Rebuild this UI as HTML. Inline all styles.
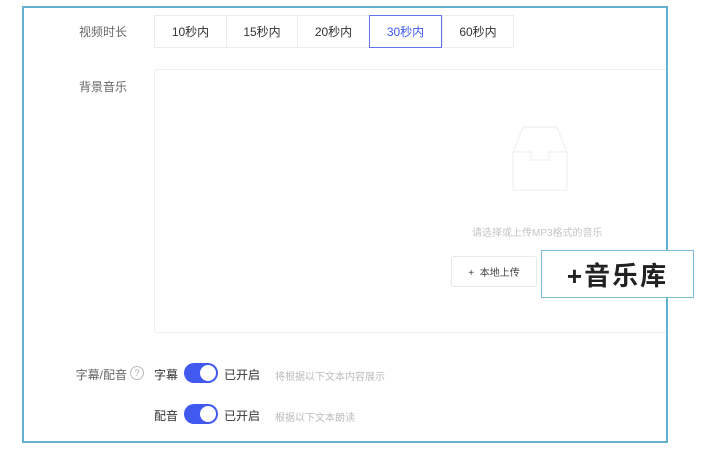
<!DOCTYPE html>
<html><head><meta charset="utf-8"><style>
body{margin:0;width:711px;height:469px;background:#fff;font-family:"Liberation Sans","Noto Sans CJK SC",sans-serif;position:relative;overflow:hidden}
.a{position:absolute}
.frame{left:22px;top:6px;width:642px;height:433px;border:2px solid #62b2d2}
.lbl{font-size:12px;color:#666}
.seg{top:15px;height:33px;border:1px solid #ececec;font-size:12px;color:#333;display:flex;align-items:center;justify-content:center;box-sizing:border-box}
.tog{width:34px;height:20px;border-radius:10px;background:#4259f0}
.tog:after{content:"";position:absolute;right:2px;top:2px;width:16px;height:16px;border-radius:50%;background:#fff}
</style></head><body>
<div class="a lbl" style="left:79px;top:23px">视频时长</div>
<div class="a seg" style="left:154px;width:73px">10秒内</div>
<div class="a seg" style="left:226px;width:72px">15秒内</div>
<div class="a seg" style="left:297px;width:73px">20秒内</div>
<div class="a seg" style="left:442px;width:72px">60秒内</div>
<div class="a seg" style="left:369px;width:73px;border:1px solid #6275ee;color:#3d5af1">30秒内</div>
<div class="a lbl" style="left:79px;top:78px">背景音乐</div>
<div class="a" style="left:154px;top:69px;width:520px;height:262px;border:1px solid #efefef;border-radius:3px"></div>
<svg class="a" style="left:505px;top:112px" width="70" height="80"><path d="M8 40 L18 15 H52 L62 40 V78 H8 Z M8 40 H26 V48 H44 V40 H62" fill="none" stroke="#f3f3f3" stroke-width="1.5"/></svg>
<div class="a" style="left:472px;top:224px;font-size:10px;color:#c4c4c4">请选择或上传MP3格式的音乐</div>
<div class="a" style="left:451px;top:256px;width:86px;height:31px;border:1px solid #e9e9e9;border-radius:3px;font-size:10px;color:#444;display:flex;align-items:center;justify-content:center;box-sizing:border-box">+&nbsp; 本地上传</div>
<div class="a" style="left:666px;top:0;width:45px;height:469px;background:#fff"></div>
<div class="a frame"></div>
<div class="a" style="left:541px;top:250px;width:153px;height:48px;border:1px solid #7bbcd8;background:#fff;box-sizing:border-box;font-size:26px;font-weight:bold;color:#222;letter-spacing:2px;display:flex;align-items:center;justify-content:center">+音乐库</div>
<div class="a lbl" style="left:60px;width:67px;text-align:right;top:366px">字幕/配音</div>
<div class="a" style="left:130px;top:366px;width:12px;height:12px;border:1px solid #bbb;border-radius:50%;font-size:9px;color:#aaa;text-align:center;line-height:12px">?</div>
<div class="a" style="left:154px;top:366px;font-size:12px;color:#333">字幕</div>
<div class="a tog" style="left:184px;top:363px"></div>
<div class="a" style="left:224px;top:366px;font-size:12px;color:#333">已开启</div>
<div class="a" style="left:275px;top:368px;font-size:10px;color:#bbb">将根据以下文本内容展示</div>
<div class="a" style="left:154px;top:407px;font-size:12px;color:#333">配音</div>
<div class="a tog" style="left:184px;top:404px"></div>
<div class="a" style="left:224px;top:407px;font-size:12px;color:#333">已开启</div>
<div class="a" style="left:275px;top:409px;font-size:10px;color:#bbb">根据以下文本朗读</div>
</body></html>
